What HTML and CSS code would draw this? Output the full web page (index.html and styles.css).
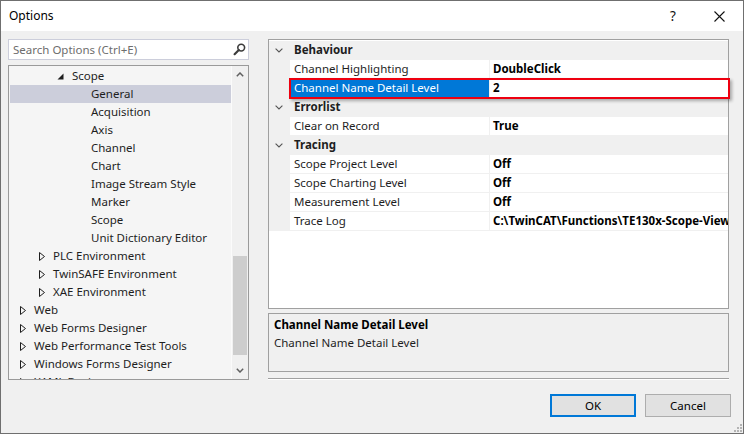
FILE: index.html
```html
<!DOCTYPE html>
<html>
<head>
<meta charset="utf-8">
<link rel="stylesheet" href="styles.css">
</head>
<body>
<div class="window">
  <div class="titlebar">
    <span class="title">Options</span>
    <span class="spacer"></span>
    <span class="tb-btn help">?</span>
    <span class="tb-btn close"><svg width="11" height="11" viewBox="0 0 11 11"><path d="M0.5 0.5 L10.5 10.5 M10.5 0.5 L0.5 10.5" stroke="#111" stroke-width="1.1" fill="none"/></svg></span>
  </div>
  <div class="body">
    <div class="cols">
      <div class="left">
        <div class="search">
          <span class="ph">Search Options (Ctrl+E)</span>
          <svg class="mag" width="13" height="13" viewBox="0 0 13 13"><circle cx="8.2" cy="4.6" r="3.4" stroke="#3c3c3c" stroke-width="1.6" fill="none"/><path d="M5.8 7 L1.6 11.2" stroke="#3c3c3c" stroke-width="2.2" stroke-linecap="round"/></svg>
        </div>
        <div class="tree">
          <div class="tree-list">
            <div class="row l2"><span class="tg"><svg width="7" height="7" viewBox="0 0 7 7"><path d="M6.5 0.5 L6.5 6.5 L0.5 6.5 Z" fill="#1e1e1e"/></svg></span><span class="lbl">Scope</span></div>
            <div class="row l3 sel"><span class="tg"></span><span class="lbl">General</span></div>
            <div class="row l3"><span class="tg"></span><span class="lbl">Acquisition</span></div>
            <div class="row l3"><span class="tg"></span><span class="lbl">Axis</span></div>
            <div class="row l3"><span class="tg"></span><span class="lbl">Channel</span></div>
            <div class="row l3"><span class="tg"></span><span class="lbl">Chart</span></div>
            <div class="row l3"><span class="tg"></span><span class="lbl">Image Stream Style</span></div>
            <div class="row l3"><span class="tg"></span><span class="lbl">Marker</span></div>
            <div class="row l3"><span class="tg"></span><span class="lbl">Scope</span></div>
            <div class="row l3"><span class="tg"></span><span class="lbl">Unit Dictionary Editor</span></div>
            <div class="row l1"><span class="tg c"><svg width="7" height="9" viewBox="0 0 7 9"><path d="M0.5 0.5 L5.5 4.5 L0.5 8.5 Z" stroke="#1e1e1e" fill="none"/></svg></span><span class="lbl">PLC Environment</span></div>
            <div class="row l1"><span class="tg c"><svg width="7" height="9" viewBox="0 0 7 9"><path d="M0.5 0.5 L5.5 4.5 L0.5 8.5 Z" stroke="#1e1e1e" fill="none"/></svg></span><span class="lbl">TwinSAFE Environment</span></div>
            <div class="row l1"><span class="tg c"><svg width="7" height="9" viewBox="0 0 7 9"><path d="M0.5 0.5 L5.5 4.5 L0.5 8.5 Z" stroke="#1e1e1e" fill="none"/></svg></span><span class="lbl">XAE Environment</span></div>
            <div class="row l0"><span class="tg c"><svg width="7" height="9" viewBox="0 0 7 9"><path d="M0.5 0.5 L5.5 4.5 L0.5 8.5 Z" stroke="#1e1e1e" fill="none"/></svg></span><span class="lbl">Web</span></div>
            <div class="row l0"><span class="tg c"><svg width="7" height="9" viewBox="0 0 7 9"><path d="M0.5 0.5 L5.5 4.5 L0.5 8.5 Z" stroke="#1e1e1e" fill="none"/></svg></span><span class="lbl">Web Forms Designer</span></div>
            <div class="row l0"><span class="tg c"><svg width="7" height="9" viewBox="0 0 7 9"><path d="M0.5 0.5 L5.5 4.5 L0.5 8.5 Z" stroke="#1e1e1e" fill="none"/></svg></span><span class="lbl">Web Performance Test Tools</span></div>
            <div class="row l0"><span class="tg c"><svg width="7" height="9" viewBox="0 0 7 9"><path d="M0.5 0.5 L5.5 4.5 L0.5 8.5 Z" stroke="#1e1e1e" fill="none"/></svg></span><span class="lbl">Windows Forms Designer</span></div>
            <div class="row l0"><span class="tg c"><svg width="7" height="9" viewBox="0 0 7 9"><path d="M0.5 0.5 L5.5 4.5 L0.5 8.5 Z" stroke="#1e1e1e" fill="none"/></svg></span><span class="lbl">XAML Designer</span></div>
          </div>
          <div class="vscroll">
            <div class="sb-btn"><svg width="8" height="5" viewBox="0 0 8 5"><path d="M0.8 4.2 L4 1 L7.2 4.2" stroke="#606060" stroke-width="1.5" fill="none"/></svg></div>
            <div class="sb-track"><div class="sb-thumb"></div></div>
            <div class="sb-btn"><svg width="8" height="5" viewBox="0 0 8 5"><path d="M0.8 0.8 L4 4 L7.2 0.8" stroke="#606060" stroke-width="1.5" fill="none"/></svg></div>
          </div>
        </div>
      </div>
      <div class="right">
        <div class="pg">
          <div class="pg-row cat"><span class="gut"><svg width="8" height="5" viewBox="0 0 8 5"><path d="M0.6 0.6 L4 4 L7.4 0.6" stroke="#555" stroke-width="1.1" fill="none"/></svg></span><span class="cat-name">Behaviour</span></div>
          <div class="pg-row"><span class="gut"></span><span class="name">Channel Highlighting</span><span class="val">DoubleClick</span></div>
          <div class="pg-row selrow"><span class="gut"></span><span class="name">Channel Name Detail Level</span><span class="val">2</span></div>
          <div class="pg-row cat"><span class="gut"><svg width="8" height="5" viewBox="0 0 8 5"><path d="M0.6 0.6 L4 4 L7.4 0.6" stroke="#555" stroke-width="1.1" fill="none"/></svg></span><span class="cat-name">Errorlist</span></div>
          <div class="pg-row"><span class="gut"></span><span class="name">Clear on Record</span><span class="val">True</span></div>
          <div class="pg-row cat"><span class="gut"><svg width="8" height="5" viewBox="0 0 8 5"><path d="M0.6 0.6 L4 4 L7.4 0.6" stroke="#555" stroke-width="1.1" fill="none"/></svg></span><span class="cat-name">Tracing</span></div>
          <div class="pg-row"><span class="gut"></span><span class="name">Scope Project Level</span><span class="val">Off</span></div>
          <div class="pg-row"><span class="gut"></span><span class="name">Scope Charting Level</span><span class="val">Off</span></div>
          <div class="pg-row"><span class="gut"></span><span class="name">Measurement Level</span><span class="val">Off</span></div>
          <div class="pg-row"><span class="gut"></span><span class="name">Trace Log</span><span class="val">C:\TwinCAT\Functions\TE130x-Scope-View\Logs</span></div>
          <div class="highlight"></div>
        </div>
        <div class="desc">
          <div class="desc-title">Channel Name Detail Level</div>
          <div class="desc-text">Channel Name Detail Level</div>
        </div>
        <div class="sep"></div>
      </div>
    </div>
    <div class="footer">
      <button class="btn ok">OK</button>
      <button class="btn">Cancel</button>
    </div>
  </div>
  <svg class="grip" width="8" height="8" viewBox="0 0 8 8"><g fill="#b4b4b4"><rect x="6" y="0" width="2" height="2"/><rect x="3" y="3" width="2" height="2"/><rect x="6" y="3" width="2" height="2"/><rect x="0" y="6" width="2" height="2"/><rect x="3" y="6" width="2" height="2"/><rect x="6" y="6" width="2" height="2"/></g></svg>
</div>
</body>
</html>
```

FILE: styles.css
```css
* { box-sizing: border-box; }
html, body { margin: 0; padding: 0; }
body {
  width: 744px;
  height: 434px;
  overflow: hidden;
  font-family: "Noto Sans", "Open Sans", sans-serif;
  font-size: 11.5px;
  color: #1e1e1e;
  background: #f0f0f0;
}
.window {
  position: relative;
  width: 744px;
  height: 434px;
  border: 1px solid #6f6f6f;
  background: #f0f0f0;
  display: flex;
  flex-direction: column;
}
.titlebar {
  height: 30px;
  background: #ffffff;
  display: flex;
  align-items: center;
  flex: none;
}
.title {
  padding-left: 8px;
  font-size: 12px;
  color: #000;
  margin-top: -1px;
}
.spacer { flex: 1; }
.tb-btn {
  width: 46px;
  height: 30px;
  display: flex;
  align-items: center;
  justify-content: center;
  color: #111;
}
.help { font-size: 13.5px; margin-top: -1px; }
.close { width: 47px; }

.body {
  flex: 1;
  display: flex;
  flex-direction: column;
  padding: 8px 14px 0 7px;
}
.cols {
  display: flex;
  gap: 19px;
  height: 341px;
}
.left {
  width: 241px;
  display: flex;
  flex-direction: column;
  gap: 5px;
}
.search {
  height: 21px;
  background: #fff;
  border: 1px solid #cccedb;
  display: flex;
  align-items: center;
  padding-left: 4px;
  padding-right: 2px;
}
.ph { color: #6d6d6d; flex: 1; }
.mag { margin-top: -1px; }

.tree {
  height: 315px;
  border: 1px solid #9a9a9a;
  background: #f5f5f5;
  display: flex;
}
.tree-list {
  flex: 1;
  overflow: hidden;
  padding-top: 1px;
  padding-left: 1px;
}
.row {
  height: 18px;
  display: flex;
  align-items: center;
  white-space: nowrap;
}
.row.l0 { padding-left: 5px; }
.row.l1 { padding-left: 24px; }
.row.l2 { padding-left: 43px; }
.row.l3 { padding-left: 62px; }
.row.sel { background: #cccedb; }
.tg {
  width: 19px;
  height: 18px;
  flex: none;
  display: flex;
  align-items: center;
  padding-left: 4px;
}
.tg.c { padding-left: 5px; }
.tg svg { display: block; }
.lbl { margin-top: -1px; }

.vscroll {
  width: 17px;
  flex: none;
  display: flex;
  flex-direction: column;
  background: #f0f0f0;
  border-left: 1px solid #fbfbfb;
}
.sb-btn {
  height: 17px;
  display: flex;
  align-items: center;
  justify-content: center;
}
.sb-track { flex: 1; }
.sb-thumb {
  margin-top: 173px;
  height: 99px;
  margin-left: 1px;
  margin-right: 1px;
  background: #cdcdcd;
}

.right {
  width: 461px;
  display: flex;
  flex-direction: column;
}
.pg {
  position: relative;
  height: 271px;
  border: 1px solid #a0a0a0;
  background: #fff;
  padding-top: 1px;
}
.pg-row {
  height: 19px;
  display: flex;
  border-bottom: 1px solid #f0f0f0;
  white-space: nowrap;
}
.pg-row.cat { background: #f0f0f0; }
.gut {
  width: 21px;
  flex: none;
  background: #f0f0f0;
  display: flex;
  align-items: center;
  padding-left: 6px;
}
.cat-name {
  font-weight: bold;
  padding-left: 4px;
  line-height: 18px;
  color: #1e1e1e;
}
.name {
  width: 200px;
  flex: none;
  padding-left: 4px;
  line-height: 18px;
  border-right: 1px solid #f0f0f0;
  overflow: hidden;
}
.val {
  flex: 1;
  padding-left: 3px;
  font-weight: bold;
  line-height: 18px;
  overflow: hidden;
  color: #000;
}
.selrow .name { background: #0078d7; color: #fff; }
.highlight {
  position: absolute;
  left: 20px;
  top: 38px;
  width: 441px;
  height: 21px;
  border: 2px solid #ee0010;
  box-shadow: 2px 2px 3px rgba(0, 0, 0, 0.3);
}

.desc {
  margin-top: 4px;
  height: 59px;
  border: 1px solid #a0a0a0;
  background: #f0f0f0;
  padding: 2px 5px;
}
.desc-title { font-weight: bold; line-height: 18px; color: #000; }
.desc-text { line-height: 18px; color: #1e1e1e; }
.sep {
  margin-top: 6px;
  height: 2px;
  border-top: 1px solid #a0a0a0;
  border-bottom: 1px solid #ffffff;
}

.footer {
  margin-top: 14px;
  display: flex;
  justify-content: flex-end;
  gap: 9px;
  margin-right: -2px;
}
.btn {
  width: 86px;
  height: 23px;
  background: #e1e1e1;
  border: 1px solid #adadad;
  font-family: "Noto Sans", "Open Sans", sans-serif;
  font-size: 11.5px;
  color: #000;
  padding: 0;
}
.btn.ok { border: 2px solid #0078d7; }
.grip {
  position: absolute;
  right: 1px;
  bottom: 1px;
}
```
